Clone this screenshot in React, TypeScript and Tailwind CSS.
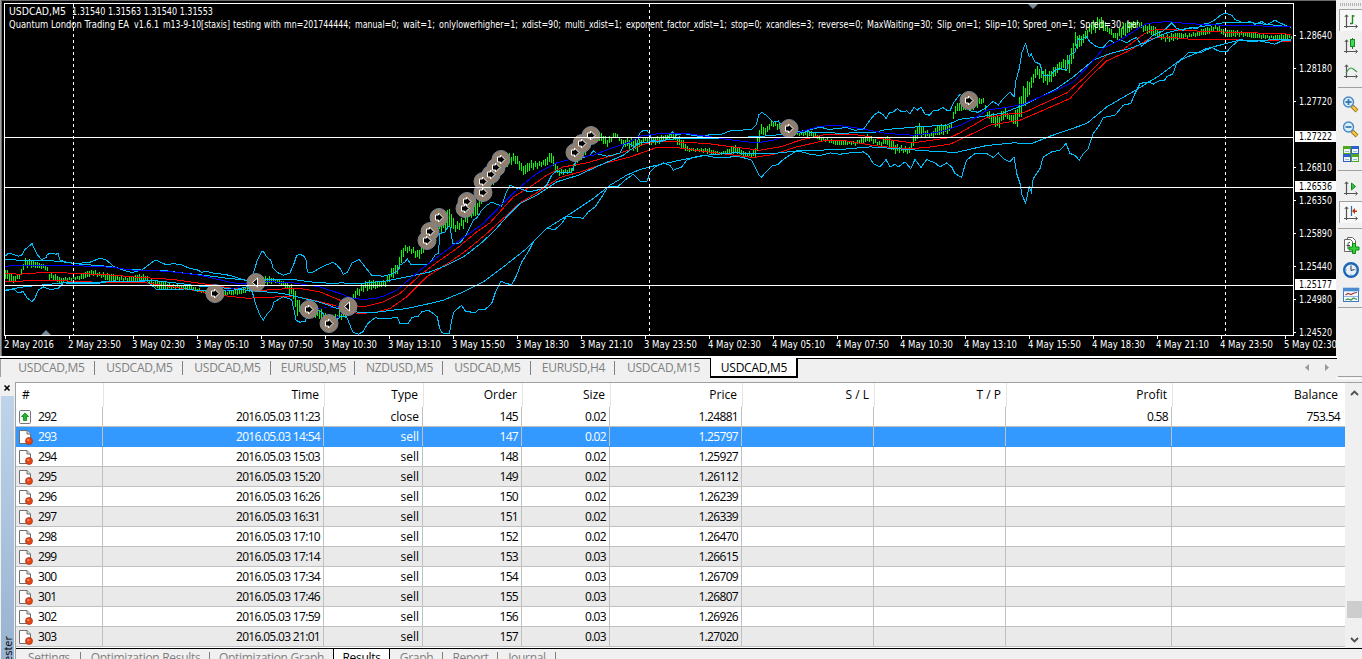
import type { ReactNode } from "react";

type Point = [number, number];

interface Candle {
  x: number;
  y: number;
  half: number;
}

interface Label {
  x: number;
  width: number;
  text: string;
}

const HEADER: Label[] = [
  { x: 9, width: 120, text: "Quantum London Trading EA" },
  { x: 134, width: 25, text: "v1.6.1" },
  { x: 163, width: 67, text: "m13-9-10[staxis]" },
  { x: 233, width: 48, text: "testing with" },
  { x: 284, width: 67, text: "mn=201744444;" },
  { x: 355, width: 44, text: "manual=0;" },
  { x: 403, width: 32, text: "wait=1;" },
  { x: 439, width: 79, text: "onlylowerhigher=1;" },
  { x: 522, width: 39, text: "xdist=90;" },
  { x: 565, width: 57, text: "multi_xdist=1;" },
  { x: 626, width: 101, text: "exponent_factor_xdist=1;" },
  { x: 731, width: 31, text: "stop=0;" },
  { x: 766, width: 48, text: "xcandles=3;" },
  { x: 818, width: 45, text: "reverse=0;" },
  { x: 867, width: 66, text: "MaxWaiting=30;" },
  { x: 937, width: 44, text: "Slip_on=1;" },
  { x: 985, width: 35, text: "Slip=10;" },
  { x: 1023, width: 53, text: "Spred_on=1;" },
  { x: 1080, width: 44, text: "Spred=30;" },
  { x: 1127, width: 12, text: "ber" },
];

const TIMES = [
  "2 May 2016", "2 May 23:50", "3 May 02:30", "3 May 05:10", "3 May 07:50", "3 May 10:30", "3 May 13:10",
  "3 May 15:50", "3 May 18:30", "3 May 21:10", "3 May 23:50", "4 May 02:30", "4 May 05:10", "4 May 07:50",
  "4 May 10:30", "4 May 13:10", "4 May 15:50", "4 May 18:30", "4 May 21:10", "4 May 23:50", "5 May 02:30",
];

const PRICES: [number, string][] = [
  [35, "1.28640"], [68, "1.28180"], [101, "1.27720"], [167, "1.26810"], [200, "1.26350"],
  [233, "1.25890"], [266, "1.25440"], [299, "1.24980"], [332, "1.24520"],
];

const LEVELS: [number, string][] = [[137, "1.27222"], [187, "1.26536"], [285, "1.25177"]];

// Every line is stored in four pieces of thirds of a pixel, each with its own origin.
const ORIGINS: Point[] = [[0, 220], [340, 120], [640, 0], [960, 0]];

const UPPER_FAST = [
  "15,108 25,100 40,102 55,108 65,104 75,88 87,78 96,70 104,88 112,104 125,118 138,112 142,102 155,100 168,102 174,100 180,120 200,126 225,130 250,128 270,126 290,118 300,114 320,120 340,138 360,146 385,155 400,156 425,150 440,138 460,124 468,120 485,128 500,134 520,130 545,134 570,145 590,148 605,156 620,154 645,160 670,162 690,166 710,172 740,182 760,160 772,120 785,95 790,94 800,110 812,120 820,145 835,158 850,165 870,158 882,130 890,106 900,102 912,108 918,120 922,155 935,158 955,146 975,136 990,130 1000,126 1010,134",
  "0,445 10,462 22,456 36,428 58,418 75,440 95,465 130,468 160,460 172,452 180,435 195,425 202,415 212,432 240,434 262,434 275,420 285,405 295,400 300,340 315,335 325,318 330,320 338,370 360,368 375,350 385,330 400,300 412,292 425,270 440,255 455,246 470,252 485,258 497,220 510,195 530,204 550,208 565,215 600,208 620,195 635,165 650,152 670,158 695,155 705,130 715,115 735,110 750,105 760,92 770,100 785,104 800,108 820,104 840,98 855,70 870,72 885,80 893,65",
  "-2,400 8,392 20,390 28,400 35,420 60,425 75,420 85,410 97,395 110,405 130,400 155,405 175,408 195,407 215,402 245,402 270,392 300,390 335,388 348,375 357,343 366,337 378,345 388,355 400,366 415,362 430,380 450,385 470,395 490,392 515,388 540,380 565,388 595,385 620,382 645,390 670,388 690,360 702,345 715,335 728,342 738,355 748,338 760,335 772,325 785,335 800,332 810,342 822,320 832,330 843,320 855,342 868,345 880,332 895,330 908,322 920,330 930,332 940,308 950,295",
  "0,282 8,290 18,315 35,334 55,336 75,325 100,303 115,315 130,295 150,275 162,290 168,240 178,205 186,155 197,130 202,150 208,170 214,162 225,185 240,192 250,225 270,228 285,210 300,205 320,210 330,165 345,155 355,115 365,120 378,108 390,125 410,140 430,142 440,130 450,120 465,128 480,118 500,128 515,118 530,112 545,138 560,125 575,108 590,100 610,92 635,68 650,85 670,90 690,82 710,85 730,72 750,68 770,55 785,42 800,40 815,45 825,58 850,68 870,64 885,72 905,64 920,74 945,60 960,68 975,75 993,82",
];

const LOWER_FAST = [
  "15,212 40,206 55,218 70,214 80,232 96,245 104,235 115,210 130,200 150,208 175,205 190,188 240,190 290,190 340,182 400,185 440,182 470,208 510,208 560,206 600,212 640,210 700,210 740,200 757,215 768,255 780,285 790,300 802,280 815,268 822,245 850,230 875,238 882,270 888,300 900,306 916,304 925,275 950,270 965,276 985,298 1002,306",
  "0,590 20,590 38,635 55,642 68,635 85,608 105,593 140,595 172,592 180,610 205,610 215,592 235,588 245,575 265,570 280,580 292,590 298,620 305,638 328,640 335,600 342,575 365,555 375,572 405,578 415,568 435,568 455,550 465,520 482,483 500,490 515,494 530,465 545,425 565,395 580,365 605,340 620,325 645,328 665,310 680,288 705,292 730,294 745,275 765,260 785,230 805,198 835,198 855,180 880,162 900,182",
  "8,545 22,542 30,515 45,500 70,488 90,495 100,510 125,500 140,480 165,470 195,465 225,472 260,472 290,468 320,475 335,480 345,500 357,525 364,532 378,515 395,498 415,492 430,478 445,468 465,455 485,455 510,462 540,466 570,458 600,462 630,458 670,455 685,465 700,490 720,500 738,478 750,500 765,492 775,500 795,485 812,505 825,478 843,502 860,478 885,488 900,500 920,488 935,500 945,520",
  "5,532 12,505 20,480 45,460 80,460 100,472 115,458 130,475 150,485 162,470 170,520 180,550 186,585 197,608 203,580 208,560 214,575 220,535 240,505 250,470 275,455 300,450 318,430 330,460 345,465 358,480 370,460 385,445 400,400 415,380 430,352 465,345 490,315 512,310 525,280 540,250 565,245 580,252 600,240 612,242 622,228 638,222 650,190 670,172 685,158 720,158 755,142 775,152 800,155 815,138 840,118 870,124 900,122 945,132 965,122 993,122",
];

const UPPER_SLOW = [
  "15,118 60,120 130,120 180,124 240,132 320,138 380,148 440,150 500,152 560,160 620,166 680,174 740,180 780,178 880,178 940,186 1000,190",
  "0,488 60,490 140,482 200,470 270,455 320,435 370,410 420,372 460,335 500,290 540,250 590,225 650,185 715,165 780,135 850,105",
  "0,428 60,422 100,416 220,414 300,412 400,406 450,398 500,395 600,399 700,397 740,388 830,380 920,375",
  "0,357 60,350 130,338 190,315 240,290 290,265 340,230 400,180 450,160 510,145 560,125 620,98 660,88 720,80 800,66 880,68 915,72 993,80",
];

const LOWER_SLOW = [
  "15,210 70,200 120,195 190,188 280,186 430,182 470,182 540,190 600,198 680,204 740,210 850,220 900,232 960,246 1010,264",
  "0,568 60,577 110,576 200,565 260,552 310,540 370,515 430,485 490,440 560,385 620,325 700,275 760,235 810,195 860,165",
  "0,508 50,495 130,478 200,465 280,458 400,460 470,452 600,448 690,440 780,446 860,452 950,457",
  "0,454 80,436 160,428 215,430 270,408 380,370 440,320 530,268 600,225 660,180 740,145 830,122 900,120 993,118",
];

const BLUE = [
  "15,138 80,135 180,136 280,138 340,142 400,150 500,153 600,165 700,188 760,192 800,184 880,188 960,200",
  "0,520 30,532 60,537 100,536 130,528 170,510 240,450 300,405 360,360 430,310 480,258 540,200 590,160 650,128 700,115 760,105 820,82 870,65",
  "0,408 60,400 130,399 200,408 280,420 350,428 400,420 470,398 540,378 600,376 660,385 740,400 820,405 900,395",
  "0,376 50,350 80,330 150,320 190,312 240,290 290,270 340,245 390,192 430,145 480,120 530,88 560,70 620,64 680,70 760,74 860,76 993,80",
];

const RED_TOP = [
  "15,160 60,162 140,156 240,160 340,165 400,170 520,178 620,192 700,205 760,212 850,206 900,205 960,215",
  "0,540 40,557 80,558 130,545 180,520 240,465 300,420 350,385 410,335 450,308 520,230 570,200 620,165 670,140 740,128 820,105 880,85",
  "0,436 50,422 110,425 200,430 280,440 360,450 420,440 480,420 560,402 640,402 740,418 820,428 930,412",
  "0,398 80,352 140,342 190,338 240,315 320,278 370,235 440,165 490,148 540,110 570,90 620,88 740,94 880,98 960,100 993,103",
];

const RED_BOTTOM = [
  "15,184 80,182 170,180 240,185 340,186 440,188 520,200 580,210 660,225 740,234 800,232 880,227 940,240 1000,255",
  "0,562 30,574 50,579 100,578 150,565 200,530 260,470 330,425 380,390 440,340 500,285 540,248 590,218 660,172 720,155 800,128 870,110",
  "0,460 50,442 110,442 180,452 260,462 340,472 400,463 470,440 550,422 620,422 700,436 800,446 860,442 930,432",
  "0,418 90,375 180,360 250,330 330,295 380,240 440,182 500,155 570,115 620,110 700,118 800,119 900,120 993,124",
];

// x, middle, half height
const PRICE_PATH = `5,273,4 13,279,4 20,275,3 24,262,4 34,264,3 46,267,3 49,275,4 60,280,2 80,277,2 92,272,3 110,277,3 130,279,3
145,277,3 152,283,4 170,286,3 190,287,2 205,292,2 215,294,2 235,292,2 250,288,3 256,283,6 262,280,4 275,280,2 285,284,3 293,292,5
296,305,9 305,310,5 318,312,4 325,318,6 333,320,5 340,314,5 350,306,7 355,294,7 365,285,4 385,283,4 392,272,5 398,268,4 400,258,7
405,248,4 413,251,4 418,255,4 425,243,5 432,235,7 440,225,7 449,217,8 455,227,4 463,222,8 470,210,7 477,208,6 483,188,9 490,180,9
498,170,9 506,160,6 515,158,7 523,170,4 530,165,4 540,164,4 548,160,4 550,155,5 558,172,3 572,170,3 577,155,6 585,148,6 592,138,5
600,136,4 607,142,3 615,134,3 622,142,3 630,143,4 637,145,6 645,139,3 650,141,3 660,139,3 672,135,4 680,142,4 688,149,2 705,150,2
720,153,2 735,149,3 745,154,3 754,154,4 757,145,8 760,129,5 765,131,3 772,122,4 782,129,4 790,130,4 800,134,2 812,133,2 820,138,2
835,142,2 855,143,2 868,137,3 880,144,3 886,139,4 895,148,4 909,150,4 914,138,5 918,129,6 930,135,3 937,130,5 950,128,3 955,108,7
965,104,5 975,103,5 983,100,4 987,114,4 998,122,5 1004,112,7 1010,118,4 1016,118,9 1022,100,10 1030,85,9 1036,70,7 1048,78,5
1060,65,7 1070,62,8 1075,40,7 1080,42,7 1090,28,6 1100,22,5 1107,28,5 1115,36,4 1125,28,6 1137,23,4 1145,28,4 1155,31,4 1164,38,4
1175,36,3 1190,35,2 1205,31,3 1216,27,4 1225,33,3 1240,33,3 1255,35,2 1275,37,2 1292,36,2`;

const SELLS: Point[] = [
  [215, 293], [309, 309], [329, 323], [427, 240], [430, 231], [439, 217], [465, 208], [467, 201], [483, 192],
  [483, 181], [491, 174], [496, 167], [501, 159], [575, 152], [582, 143], [591, 135], [789, 128], [969, 100],
];

const CLOSES: Point[] = [[256, 282], [348, 306]];

const TABS = [
  { text: "USDCAD,M5", width: 88 },
  { text: "USDCAD,M5", width: 88 },
  { text: "USDCAD,M5", width: 88 },
  { text: "EURUSD,M5", width: 84 },
  { text: "NZDUSD,M5", width: 88 },
  { text: "USDCAD,M5", width: 88 },
  { text: "EURUSD,H4", width: 84 },
  { text: "USDCAD,M15", width: 95 },
];

const ROWS = [
  ["292", "2016.05.03 11:23", "close", "145", "0.02", "1.24881", "0.58", "753.54"],
  ["293", "2016.05.03 14:54", "sell", "147", "0.02", "1.25797"],
  ["294", "2016.05.03 15:03", "sell", "148", "0.02", "1.25927"],
  ["295", "2016.05.03 15:20", "sell", "149", "0.02", "1.26112"],
  ["296", "2016.05.03 16:26", "sell", "150", "0.02", "1.26239"],
  ["297", "2016.05.03 16:31", "sell", "151", "0.02", "1.26339"],
  ["298", "2016.05.03 17:10", "sell", "152", "0.02", "1.26470"],
  ["299", "2016.05.03 17:14", "sell", "153", "0.03", "1.26615"],
  ["300", "2016.05.03 17:34", "sell", "154", "0.03", "1.26709"],
  ["301", "2016.05.03 17:46", "sell", "155", "0.03", "1.26807"],
  ["302", "2016.05.03 17:59", "sell", "156", "0.03", "1.26926"],
  ["303", "2016.05.03 21:01", "sell", "157", "0.03", "1.27020"],
];

const COLUMNS = "grid grid-cols-[87px_221px_99px_99px_88px_132px_132px_132px_166px_173px]";

function joinPieces(pieces: string[]) {
  return pieces
    .flatMap((piece, i) =>
      piece.split(" ").map((pair) => {
        const [x, y] = pair.split(",").map(Number);
        return `${(ORIGINS[i][0] + x / 3).toFixed(1)},${(ORIGINS[i][1] + y / 3 + 0.2).toFixed(1)}`;
      })
    )
    .join(" ");
}

function buildBars() {
  const path: Candle[] = PRICE_PATH.split(/\s+/).map((item) => {
    const [x, y, half] = item.split(",").map(Number);
    return { x, y, half };
  });
  let d = "";
  for (let x = 5; x < 1292; x += 2) {
    const next = Math.max(1, path.findIndex((p) => p.x >= x));
    const a = path[next - 1];
    const b = path[next];
    const t = (x - a.x) / (b.x - a.x);
    const half = a.half + (b.half - a.half) * t;
    const wave = Math.sin(x * 1.7) * half * 0.3;
    const size = half * (0.75 + 0.25 * Math.sin(x * 2.9));
    const y = a.y + (b.y - a.y) * t + wave;
    d += `M${x + 0.5} ${Math.round(y - size)}V${Math.round(y + size) + 1}`;
  }
  return d;
}

function Line({ pieces, color }: Readonly<{ pieces: string[]; color: string }>) {
  return <polyline points={joinPieces(pieces)} fill="none" stroke={color} strokeWidth="1" shapeRendering="crispEdges" />;
}

function Chart() {
  return (
    <svg
      width="1336"
      height="356"
      viewBox="0 0 1336 356"
      className="block bg-black [font-family:'DejaVu_Sans_Condensed','DejaVu_Sans',sans-serif] text-[10px]"
    >
      <path d="M0 .5H1336" stroke="#6b6b6b" />
      <path d="M.5 0V356" stroke="#a0a0a0" />
      <path d="M1.5 1V356" stroke="#696969" />
      <g shapeRendering="crispEdges">
        <path d={buildBars()} stroke="#00ff00" />
      </g>
      <Line pieces={RED_TOP} color="#ff0000" />
      <Line pieces={RED_BOTTOM} color="#ff0000" />
      <Line pieces={UPPER_FAST} color="#00bfff" />
      <Line pieces={LOWER_FAST} color="#00bfff" />
      <Line pieces={UPPER_SLOW} color="#00bfff" />
      <Line pieces={LOWER_SLOW} color="#00bfff" />
      <Line pieces={BLUE} color="#0000ff" />
      <path
        d="M220 292L256 282M312 309L348 306M333 322L348 306"
        fill="none"
        stroke="#0000ff"
        strokeDasharray="3 3"
        shapeRendering="crispEdges"
      />
      {[...SELLS, ...CLOSES].map(([x, y]) => (
        <circle key={`${x}-${y}`} cx={x} cy={y + 0.5} r="9" fill="#8f7d6e" stroke="#778899" />
      ))}
      {SELLS.map(([x, y]) => (
        <path
          key={`${x}-${y}`}
          transform={`translate(${x} ${y})`}
          d="M-3.5 -2H-.5V-4L4 .5L-.5 5V3H-3.5Z"
          fill="#000"
          stroke="#fff"
        />
      ))}
      {CLOSES.map(([x, y]) => (
        <path key={x} transform={`translate(${x} ${y})`} d="M1.5 -4L-3.5 .5L1.5 5Z" fill="#000" stroke="#fff" />
      ))}
      <g stroke="#fff" shapeRendering="crispEdges" fill="none">
        <path d="M4 3.5H1293.5V335.5H4.5V3.5" />
        <path d="M5 137.5H1293M5 187.5H1293M5 285.5H1293" />
        <path d="M73.5 4V335M649.5 4V335M1225.5 4V335" strokeDasharray="3 3" />
        {PRICES.map(([y]) => (
          <path key={y} d={`M1294 ${y + 0.5}h2`} />
        ))}
        {TIMES.map((time, i) => (
          <path key={time} d={`M${5.5 + i * 64} 336v3`} />
        ))}
      </g>
      <path d="M41 335L46 330L51 335Z M1028 4H1038L1033 9Z" fill="#778899" />
      <g fill="#fff">
        <text x="9" y="15" textLength="57" lengthAdjust="spacingAndGlyphs">USDCAD,M5</text>
        <text x="72" y="15" textLength="141" lengthAdjust="spacingAndGlyphs">1.31540 1.31563 1.31540 1.31553</text>
        {HEADER.map((part) => (
          <text key={part.x} x={part.x} y="28" textLength={part.width} lengthAdjust="spacingAndGlyphs">
            {part.text}
          </text>
        ))}
        {TIMES.map((time, i) => (
          <text key={time} x={4 + i * 64} y="348" textLength={i === 0 ? 50 : 53} lengthAdjust="spacingAndGlyphs">
            {time}
          </text>
        ))}
        {PRICES.map(([y, price]) => (
          <text key={price} x="1299" y={y + 4} textLength="33" lengthAdjust="spacingAndGlyphs">
            {price}
          </text>
        ))}
      </g>
      {LEVELS.map(([y, price]) => (
        <g key={price}>
          <rect x="1295" y={y - 6} width="41" height="11" fill="#fff" />
          <text x="1299" y={y + 3} textLength="33" lengthAdjust="spacingAndGlyphs" fill="#000">
            {price}
          </text>
        </g>
      ))}
    </svg>
  );
}

function Icon({ children }: Readonly<{ children: ReactNode }>) {
  return (
    <svg width="18" height="18" viewBox="0 0 18 18" className="block shrink-0">
      {children}
    </svg>
  );
}

function Axes() {
  return (
    <g fill="none" stroke="#555" strokeWidth="1.2">
      <path d="M3.5 2V15M1 13.5H14" />
      <path d="M1.8 4L3.5 1.8L5.2 4M12.5 11.8L14.5 13.5L12.5 15.2" strokeWidth="1" />
    </g>
  );
}

function Lens({ plus }: Readonly<{ plus?: boolean }>) {
  return (
    <Icon>
      <path d="M9 10L14 15" stroke="#a87a10" strokeWidth="4" />
      <path d="M9.5 10.5L13.5 14.5" stroke="#f3cf58" strokeWidth="2" />
      <circle cx="5.5" cy="6" r="5" fill="#d9f0fc" stroke="#4a86c8" strokeWidth="1.4" />
      <path d={plus ? "M2.5 6H8.5M5.5 3V9" : "M2.5 6H8.5"} stroke="#3f7bb0" strokeWidth="1.8" />
    </Icon>
  );
}

function Tool({ pressed, children }: Readonly<{ pressed?: boolean; children: ReactNode }>) {
  return (
    <div className="h-[25px]">
      <div className={`ml-px h-[22px] pl-1 pt-1 ${pressed ? "bg-[#f8f8f8] shadow-[inset_1px_1px_0_#a0a0a0]" : ""}`}>
        {children}
      </div>
    </div>
  );
}

function Toolbar() {
  return (
    <div className="flex w-6 flex-col bg-[#f0f0f0]">
      <div className="mb-[3px] ml-0.5 mt-[3px] h-[3px] bg-[repeating-linear-gradient(90deg,#b4b4b4_0_1px,#f0f0f0_1px_2px)]" />
      <Tool pressed>
        <Icon>
          <Axes />
          <path d="M9.5 2V11M9.5 3H11.5M7 10.5H9.5" stroke="#1e8a26" strokeWidth="1.4" fill="none" />
        </Icon>
      </Tool>
      <Tool>
        <Icon>
          <Axes />
          <path d="M9.5 0V11" stroke="#157a1c" />
          <rect x="7.5" y="1.5" width="4" height="7" fill="#3fd65a" stroke="#148a20" />
        </Icon>
      </Tool>
      <Tool>
        <Icon>
          <Axes />
          <path d="M3 10C5 7 6 5 8 5S11 7 14 9" fill="none" stroke="#3c9c46" strokeWidth="1.2" />
        </Icon>
      </Tool>
      <div className="mb-1 mt-[3px] h-px bg-[#a0a0a0]" />
      <Tool>
        <Lens plus />
      </Tool>
      <Tool>
        <Lens />
      </Tool>
      <Tool>
        <Icon>
          <path d="M0 0H8V8H0ZM8 8H16V16H8Z" fill="#4fa81d" />
          <path d="M8 0H16V8H8ZM0 8H8V16H0Z" fill="#2c5fd0" />
          <path d="M1 3H7V7H1ZM9 3H15V7H9ZM1 11H7V15H1ZM9 11H15V15H9Z" fill="#eef5f2" />
          <path d="M2 5.5H6M10 5.5H14M2 13.5H6M10 13.5H14" stroke="#9db7d8" />
        </Icon>
      </Tool>
      <div className="mb-[5px] mt-[3px] h-px bg-[#a0a0a0]" />
      <Tool>
        <Icon>
          <Axes />
          <path d="M8.5 3L12.5 6.5L8.5 10Z" fill="#2fc440" stroke="#148a20" />
        </Icon>
      </Tool>
      <Tool pressed>
        <Icon>
          <Axes />
          <path d="M8.5 1V11" stroke="#2c6ca0" strokeWidth="1.2" />
          <path d="M14 5.5H12V3L9 6L12 9V7H14Z" fill="#b8350f" />
        </Icon>
      </Tool>
      <div className="mb-1 mt-[2px] h-px bg-[#a0a0a0]" />
      <Tool>
        <Icon>
          <path d="M4.5 2.5V.5H9.5L12.5 3.5V11.5H10" fill="#fff" stroke="#666" />
          <path d="M1.5 2.5H7.5L9.5 4.5V14.5H1.5Z" fill="#fff" stroke="#666" />
          <path d="M7 5.5C5.500 5 5 6 5 7.500V12M3.500 8.500H7" fill="none" stroke="#444" />
          <path d="M9.500 6.500H12.500V10H16V13H12.500V16.500H9.500V13H6V10H9.500Z" fill="#35d23c" stroke="#0d8a16" />
        </Icon>
      </Tool>
      <Tool>
        <Icon>
          <circle cx="8" cy="8" r="6.800" fill="#e4f1fc" stroke="#1d66b8" strokeWidth="2.400" />
          <path d="M8 4V8.500L11.500 7.500" fill="none" stroke="#333" />
          <path d="M8 3V3.600M8 12.500V13M3.500 8H4M12.500 8H13" stroke="#555" />
        </Icon>
      </Tool>
      <Tool>
        <Icon>
          <rect x=".5" y="1.500" width="15" height="13" fill="#f7fbff" stroke="#3d7cc0" />
          <path d="M0 1H16V4H0ZM1 9.500H15" fill="#4b8ad0" stroke="#4b8ad0" strokeWidth=".6" />
          <path d="M2.500 8L5 6.500L8 7.500L11 6L14 5.500" fill="none" stroke="#a33a2a" strokeWidth="1.200" />
          <path d="M2.500 13L5 12L8 13L10.500 11L14 12.500" fill="none" stroke="#2f9440" strokeWidth="1.200" />
        </Icon>
      </Tool>
      <div className="-mt-px h-px bg-[#a0a0a0]" />
      <div className="mt-auto h-px bg-[#a0a0a0]" />
    </div>
  );
}

function ChartTabs() {
  return (
    <div className="flex h-[21px] w-[1336px] bg-[#f0f0f0] tracking-[-0.25px] text-[#808080]">
      <div className="flex h-[18px] border-l border-[#a0a0a0] pl-[6px]">
        {TABS.map((tab, i) => (
          <div key={i} className="flex h-[18px] items-center justify-center" style={{ width: tab.width }}>
            <span className="flex-1 pl-[2px] text-center leading-[18px]">{tab.text}</span>
            {i < TABS.length - 1 && <span className="h-[14px] w-px bg-[#808080]" />}
          </div>
        ))}
      </div>
      <div className="-mt-px h-5 w-[88px] border-b-2 border-l border-r-2 border-black bg-white pl-px text-center leading-[19px] text-black">
        USDCAD,M5
      </div>
      <div className="ml-auto mr-[7px] flex h-[17px] items-center gap-4">
        <svg width="4" height="7" viewBox="0 0 4 7"><path d="M4 0V7L0 3.500Z" fill="#999" /></svg>
        <svg width="4" height="7" viewBox="0 0 4 7"><path d="M0 0V7L4 3.500Z" fill="#999" /></svg>
      </div>
    </div>
  );
}

function RowIcon({ close }: Readonly<{ close: boolean }>) {
  if (close) {
    return (
      <svg width="14" height="16" viewBox="0 0 14 16">
        <rect x=".5" y="1.500" width="11" height="13" rx="1" fill="#f4fbf4" stroke="#777" />
        <path d="M6 4L9.500 7.500H7.500V11.500H4.500V7.500H2.500Z" fill="#23b52e" stroke="#0c7d14" strokeWidth=".8" />
      </svg>
    );
  }
  return (
    <svg width="14" height="16" viewBox="0 0 14 16">
      <path d="M.5 1.500H8L11.500 5V14.500H.5Z" fill="#fdfdfd" stroke="#6e6e6e" />
      <path d="M8 1.500V5H11.500" fill="#ddd" stroke="#6e6e6e" />
      <circle cx="10" cy="12" r="3.500" fill="#e8471b" stroke="#a52c08" strokeWidth=".7" />
      <circle cx="9.300" cy="11" r="1" fill="#ff9c74" />
    </svg>
  );
}

function ResultsTable() {
  return (
    <div className="h-[265px] w-[1329px] overflow-hidden bg-white">
      <div className={`${COLUMNS} h-6`}>
        {["#", "Time", "Type", "Order", "Size", "Price", "S / L", "T / P", "Profit", "Balance"].map((name, i) => (
          <div
            key={name}
            className={`relative left-px border-r border-[#e5e5e5] leading-6 ${i === 0 ? "pl-[5px]" : "pr-[5px] text-right last:pr-[7px]"}`}
          >
            {name}
          </div>
        ))}
      </div>
      {ROWS.map((row, i) => {
        const cells = [...row.slice(0, 6), "", "", row[6] ?? "", row[7] ?? ""];
        const tone = i === 1 ? "bg-[#3399ff] text-white" : i % 2 ? "bg-[#eaeaea]" : "bg-white";
        const line = i === 1 ? "border-[#3399ff]" : "border-[#c0c0c0]";
        return (
          <div key={row[0]} className={`${COLUMNS} h-5 border-b ${tone} ${line}`}>
            {cells.map((cell, n) => (
              <div
                key={n}
                className={`flex h-[19px] items-center last:pr-[5px] ${n < 9 ? "border-r border-[#c0c0c0]" : ""} ${n === 0 ? "gap-[5px] pl-[3px]" : "justify-end pr-[3px]"} ${n === 2 ? "" : "tracking-[-0.68px]"}`}
              >
                {n === 0 && <RowIcon close={row[2] === "close"} />}
                {cell}
              </div>
            ))}
          </div>
        );
      })}
    </div>
  );
}

function ScrollBar() {
  return (
    <div className="ml-px flex h-[265px] flex-1 flex-col items-center bg-[#f0f0f0] pt-[7px]">
      <svg width="9" height="6" viewBox="0 0 9 6"><path d="M1 5L4.500 1.500L8 5" fill="none" stroke="#505050" strokeWidth="1.800" /></svg>
      <div className="mt-[205px] h-[17px] w-[15px] bg-[#cdcdcd]" />
      <svg className="mt-[19px]" width="9" height="6" viewBox="0 0 9 6"><path d="M1 1L4.500 4.500L8 1" fill="none" stroke="#505050" strokeWidth="1.800" /></svg>
    </div>
  );
}

function BottomTab({ name, width }: Readonly<{ name: string; width: string }>) {
  return (
    <div className={`flex ${width} items-center`}>
      <span className="flex-1 pl-px text-center">{name}</span>
      <span className="h-3 w-px bg-[#808080]" />
    </div>
  );
}

function BottomTabs() {
  return (
    <div className="flex h-[11px] overflow-hidden border-t border-black leading-[18px] tracking-[-0.3px] text-[#808080]">
      <div className="flex h-[18px] pl-px">
        <BottomTab name="Settings" width="w-[64px]" />
        <BottomTab name="Optimization Results" width="w-[129px]" />
        <div className="w-[123px] text-center">Optimization Graph</div>
      </div>
      <div className="-mt-px h-5 w-[57px] border-x border-black bg-white text-center leading-5 text-black">Results</div>
      <div className="flex h-[18px]">
        <BottomTab name="Graph" width="w-[53px]" />
        <BottomTab name="Report" width="w-[55px]" />
        <BottomTab name="Journal" width="w-[58px]" />
      </div>
    </div>
  );
}

export default function App() {
  return (
    <div className="h-[659px] w-[1362px] overflow-hidden bg-[#f0f0f0] [font-family:'Open_Sans','Noto_Sans',sans-serif] text-[12px] text-black [font-stretch:88%]">
      <div className="flex h-[378px] border-b border-[#f0f0f0]">
        <div className="w-[1338px]">
          <Chart />
          <div className="h-0.5 bg-white" />
          <div className="h-px w-[1337px] bg-black" />
          <ChartTabs />
        </div>
        <Toolbar />
      </div>
      <div className="flex h-[281px] border-t border-white">
        <div className="flex w-[15px] flex-col">
          <svg className="ml-1 mt-[6px] shrink-0" width="6" height="6" viewBox="0 0 6 6"><path d="M.5 .5L5.500 5.500M5.500 .5L.5 5.500" stroke="#000" strokeWidth="1.500" /></svg>
          <div className="ml-px mt-[5px] flex w-[13px] flex-1 items-end justify-center bg-gradient-to-b from-[#bfd4ea] to-[#98b3d0]">
            <span className="-mb-[9px] rotate-180 text-[11px] leading-[13px] [writing-mode:vertical-rl]">Tester</span>
          </div>
        </div>
        <div className="mt-[3px] min-w-0 flex-1 border-l border-t border-[#a0a0a0]">
          <div className="flex">
            <ResultsTable />
            <ScrollBar />
          </div>
          <BottomTabs />
        </div>
      </div>
    </div>
  );
}
